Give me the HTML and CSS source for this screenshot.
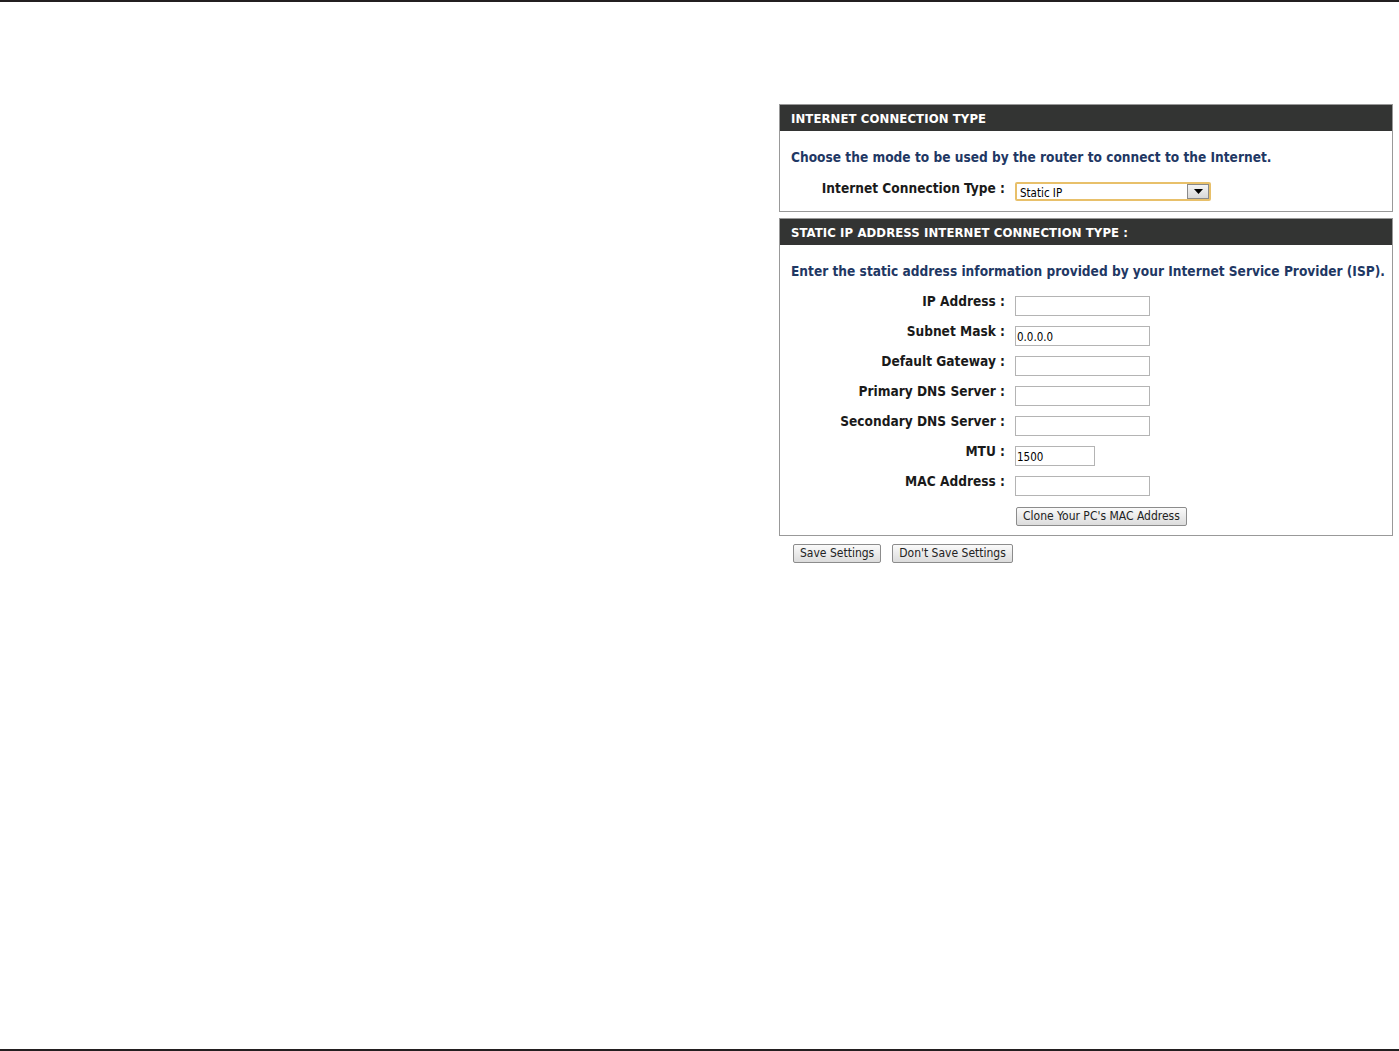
FILE: index.html
```html
<!DOCTYPE html>
<html>
<head>
    <meta charset="UTF-8">
    <link rel="stylesheet" href="styles.css">
</head>
<body>
    <div class="page">
        <div class="rule top-rule"></div>
        <div class="content">
            <div class="panel">
                <div class="box">
                    <h2>INTERNET CONNECTION TYPE</h2>
                    <p class="intro">Choose the mode to be used by the router to connect to the Internet.</p>
                    <div class="fields first">
                        <label>Internet Connection Type :</label>
                        <div class="select">
                            <span>Static IP</span>
                            <span class="arrow"><svg width="9" height="5" viewBox="0 0 9 5"><path d="M0 0h9L4.5 5z" fill="#000"/></svg></span>
                        </div>
                    </div>
                </div>

                <div class="box">
                    <h2>STATIC IP ADDRESS INTERNET CONNECTION TYPE :</h2>
                    <p class="intro">Enter the static address information provided by your Internet Service Provider (ISP).</p>
                    <div class="fields">
                        <label>IP Address :</label>
                        <input type="text" value="">
                        <label>Subnet Mask :</label>
                        <input type="text" value="0.0.0.0">
                        <label>Default Gateway :</label>
                        <input type="text" value="">
                        <label>Primary DNS Server :</label>
                        <input type="text" value="">
                        <label>Secondary DNS Server :</label>
                        <input type="text" value="">
                        <label>MTU :</label>
                        <input type="text" class="short" value="1500">
                        <label>MAC Address :</label>
                        <input type="text" value="">
                        <span></span>
                        <div class="clone"><button class="btn">Clone Your PC's MAC Address</button></div>
                    </div>
                </div>

                <div class="actions">
                    <button class="btn">Save Settings</button>
                    <button class="btn">Don't Save Settings</button>
                </div>
            </div>
        </div>
        <div class="rule bottom-rule"></div>
    </div>
</body>
</html>
```

FILE: styles.css
```css
body {
    margin: 0;
    background: #fff;
    font-family: "DejaVu Sans Condensed", "DejaVu Sans", sans-serif;
}

.page {
    height: 1051px;
    display: flex;
    flex-direction: column;
}

.rule {
    height: 2px;
    background: #231f20;
}

.content {
    flex: 1;
    display: flex;
    justify-content: flex-end;
    padding: 102px 6px 0 0;
}

.panel {
    width: 614px;
}

.box {
    border: 1px solid #999;
    margin-bottom: 6px;
    background: #fff;
}

h2 {
    margin: 0;
    height: 26px;
    line-height: 28px;
    padding-left: 11px;
    background: #333433;
    color: #fff;
    font-size: 13px;
    font-weight: bold;
    letter-spacing: 0.1px;
}

.intro {
    margin: 0;
    padding: 18px 0 0 11px;
    color: #1f3864;
    font-size: 13.6px;
    font-weight: bold;
    line-height: 16px;
}

.fields {
    display: grid;
    grid-template-columns: 225px 1fr;
    column-gap: 10px;
    row-gap: 7px;
    align-items: start;
    padding: 14px 0 9px;
}

.fields.first {
    padding: 15px 0 10px;
}

.fields label {
    text-align: right;
    color: #1a1a1a;
    font-size: 13.6px;
    font-weight: bold;
    line-height: 16px;
}

input {
    width: 135px;
    height: 20px;
    margin: 3px 0 0;
    box-sizing: border-box;
    border: 1px solid #b4b4b4;
    padding: 2px 1px 0;
    font-family: "DejaVu Sans Condensed", sans-serif;
    font-size: 11.5px;
    color: #000;
}

input.short {
    width: 80px;
}

.select {
    width: 196px;
    height: 19px;
    margin-top: 2px;
    box-sizing: border-box;
    border: 2px solid #e8c06a;
    border-radius: 2px;
    display: flex;
    justify-content: space-between;
    align-items: center;
    font-size: 11.5px;
    padding: 2px 0 0 3px;
    background: #fff;
}

.select .arrow {
    width: 22px;
    height: 15px;
    margin-top: -2px;
    box-sizing: border-box;
    border: 1px solid #8a8a8a;
    background: linear-gradient(#f4f4f4, #d8d8d8);
    display: flex;
    align-items: center;
    justify-content: center;
}

.clone {
    padding: 2px 0 0 1px;
}

.btn {
    height: 19px;
    padding: 0 6px;
    border: 1px solid #8c8c8c;
    border-radius: 2px;
    background: linear-gradient(#fafafa, #dcdcdc);
    font-family: "DejaVu Sans Condensed", sans-serif;
    font-size: 12px;
    color: #222;
    cursor: pointer;
}

.actions {
    display: flex;
    gap: 11px;
    padding-left: 14px;
    margin-top: 8px;
}
```
